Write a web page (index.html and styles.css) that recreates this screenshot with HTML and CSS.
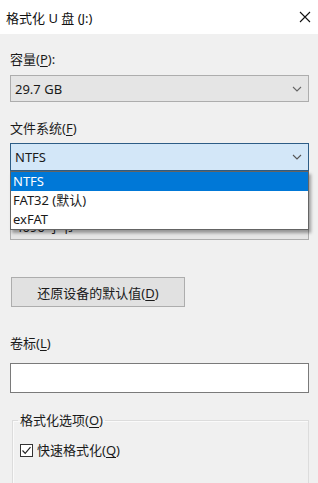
FILE: index.html
```html
<!DOCTYPE html>
<html lang="zh-CN">
<head>
  <meta charset="UTF-8" />
  <meta name="viewport" content="width=device-width, initial-scale=1.0"/>
  <title>格式化 U 盘 (J:)</title>
  <link rel="stylesheet" href="styles.css">
</head>
<body>
  <div class="titlebar">
    <span class="title">格式化 U 盘 (J:)</span>
    <svg class="close" width="12" height="12" viewBox="0 0 12 12">
      <path d="M1 1 L11 11 M11 1 L1 11" stroke="#111" stroke-width="1.1" fill="none"/>
    </svg>
  </div>

  <div class="content">
    <div class="label">容量(<u>P</u>):</div>
    <div class="combo">
      <span>29.7 GB</span>
      <svg class="chevron" width="10" height="6" viewBox="0 0 10 6"><path d="M1 1 L5 5 L9 1" stroke="#666" stroke-width="1.1" fill="none"/></svg>
    </div>

    <div class="label gap">文件系统(<u>F</u>)</div>
    <div class="combo-wrap">
      <div class="combo focused">
        <span>NTFS</span>
        <svg class="chevron" width="10" height="6" viewBox="0 0 10 6"><path d="M1 1 L5 5 L9 1" stroke="#555" stroke-width="1.1" fill="none"/></svg>
      </div>
      <ul class="dropdown">
        <li class="selected">NTFS</li>
        <li>FAT32 (默认)</li>
        <li>exFAT</li>
      </ul>
    </div>

    <div class="label gap">分配单元大小(<u>A</u>)</div>
    <div class="combo">
      <span>4096 字节</span>
      <svg class="chevron" width="10" height="6" viewBox="0 0 10 6"><path d="M1 1 L5 5 L9 1" stroke="#666" stroke-width="1.1" fill="none"/></svg>
    </div>

    <button class="restore">还原设备的默认值(<u>D</u>)</button>

    <div class="label vol">卷标(<u>L</u>)</div>
    <div class="textbox"></div>

    <fieldset class="group">
      <legend>格式化选项(<u>O</u>)</legend>
      <label class="check">
        <span class="box">
          <svg width="11" height="11" viewBox="0 0 11 11"><path d="M1.5 5.5 L4.2 8.3 L9.5 2.2" stroke="#222" stroke-width="1.2" fill="none"/></svg>
        </span>
        <span>快速格式化(<u>Q</u>)</span>
      </label>
    </fieldset>
  </div>
</body>
</html>
```

FILE: styles.css
```css
body {
  font-family: 'Noto Sans', 'Noto Sans CJK SC', sans-serif;
  font-size: 13px;
  color: #1a1a1a;
  margin: 0;
  padding: 0;
  background: #f0f0f0;
  height: 483px;
  overflow: hidden;
}

u {
  text-underline-offset: 2px;
}

.titlebar {
  background: white;
  height: 34px;
  display: flex;
  justify-content: space-between;
  align-items: center;
  padding: 0 6px 0 6px;
  box-sizing: border-box;
}

.title {
  font-size: 13px;
  color: #111;
}

.close {
  margin-right: 1px;
}

.content {
  padding: 16px 9px 0 10px;
}

.label {
  line-height: 18px;
  height: 18px;
}

.label.gap {
  margin-top: 17px;
}

.label.vol {
  margin-top: 27px;
}

.combo {
  margin-top: 7px;
  height: 27px;
  box-sizing: border-box;
  border: 1px solid #adadad;
  background: #e5e5e5;
  display: flex;
  align-items: center;
  justify-content: space-between;
  padding: 0 6px 0 4px;
}

.combo-wrap {
  position: relative;
  margin-top: 6px;
}

.combo.focused {
  margin-top: 0;
  height: 28px;
  background: #d3e7f8;
  border-color: #2d5d86;
}

.dropdown {
  position: absolute;
  top: 100%;
  left: 0;
  right: 0;
  margin: 0;
  padding: 0;
  list-style: none;
  background: white;
  border: 1px solid #646464;
  box-shadow: 2px 3px 3px rgba(0, 0, 0, 0.35);
  z-index: 10;
}

.dropdown li {
  height: 19px;
  line-height: 19px;
  padding-left: 2px;
}

.dropdown li.selected {
  background: #0078d7;
  color: white;
}

.restore {
  display: block;
  margin-top: 37px;
  width: 174px;
  height: 30px;
  margin-left: 1px;
  font-family: inherit;
  font-size: 13px;
  color: #1a1a1a;
  background: #e1e1e1;
  border: 1px solid #adadad;
  padding: 0;
}

.textbox {
  margin-top: 11px;
  height: 30px;
  box-sizing: border-box;
  background: white;
  border: 1px solid #7a7a7a;
}

.group {
  margin: 18px 0 0 2px;
  padding: 12px 0 60px 5px;
  border: 1px solid #dcdcdc;
  box-shadow: inset 1px 1px 0 #fafafa;
}

.group legend {
  padding: 0 2px;
  line-height: 18px;
}

.check {
  display: flex;
  align-items: center;
  gap: 4px;
  line-height: 18px;
  margin-left: 2px;
}

.box {
  width: 13px;
  height: 13px;
  box-sizing: border-box;
  border: 1px solid #333;
  background: white;
  display: flex;
  align-items: center;
  justify-content: center;
}
```
